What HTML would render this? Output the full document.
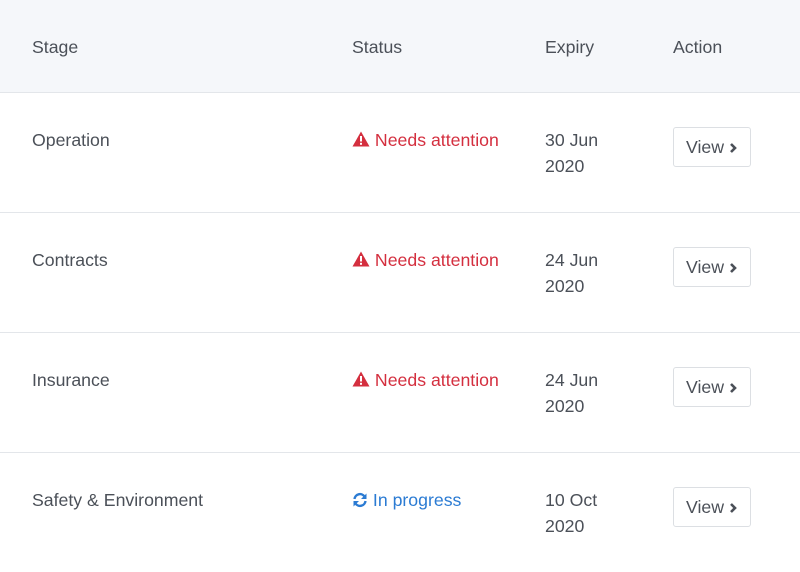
<!DOCTYPE html>
<html><head><style>
body{margin:0;width:800px;height:570px;overflow:hidden;background:#fff;font-family:"Liberation Sans",sans-serif;font-size:17.7px;color:#4b5058}
.h{height:92px;background:#f5f7fa;border-bottom:1px solid #e3e6ea;position:relative}
.r{height:119px;border-bottom:1px solid #e3e6ea;position:relative}
.c{position:absolute;line-height:26px}
.h .c{top:34px}
.r .c{top:34px}
.red{color:#d42f3f}.blue{color:#2b7bd3}
.btn{position:absolute;left:673px;top:34px;width:76px;height:38px;border:1px solid #dcdfe3;border-radius:3px;box-sizing:content-box;line-height:38px}
.btn span{position:absolute;left:12px}
.btn svg{position:absolute;left:55px;top:15px}
</style></head><body>
<div class="h"><div class="c" style="left:32px">Stage</div><div class="c" style="left:352px">Status</div><div class="c" style="left:545px">Expiry</div><div class="c" style="left:673px">Action</div></div>
<div class="r"><div class="c" style="left:32px">Operation</div><div class="c red" style="left:352px"><svg width="18" height="16" viewBox="0 0 18 16" style="vertical-align:-1px"><path d="M9 0.5L17.5 15.5H0.5Z" fill="#d42f3f"/><rect x="8" y="5" width="2" height="5.5" fill="#fff"/><rect x="8" y="11.8" width="2" height="2" fill="#fff"/></svg> Needs attention</div><div class="c" style="left:545px">30 Jun<br>2020</div><div class="btn"><span>View</span><svg width="9" height="10" viewBox="0 0 9 10"><path d="M2 1L6 5L2 9" stroke="#4b5058" stroke-width="2.6" fill="none"/></svg></div></div>
<div class="r"><div class="c" style="left:32px">Contracts</div><div class="c red" style="left:352px"><svg width="18" height="16" viewBox="0 0 18 16" style="vertical-align:-1px"><path d="M9 0.5L17.5 15.5H0.5Z" fill="#d42f3f"/><rect x="8" y="5" width="2" height="5.5" fill="#fff"/><rect x="8" y="11.8" width="2" height="2" fill="#fff"/></svg> Needs attention</div><div class="c" style="left:545px">24 Jun<br>2020</div><div class="btn"><span>View</span><svg width="9" height="10" viewBox="0 0 9 10"><path d="M2 1L6 5L2 9" stroke="#4b5058" stroke-width="2.6" fill="none"/></svg></div></div>
<div class="r"><div class="c" style="left:32px">Insurance</div><div class="c red" style="left:352px"><svg width="18" height="16" viewBox="0 0 18 16" style="vertical-align:-1px"><path d="M9 0.5L17.5 15.5H0.5Z" fill="#d42f3f"/><rect x="8" y="5" width="2" height="5.5" fill="#fff"/><rect x="8" y="11.8" width="2" height="2" fill="#fff"/></svg> Needs attention</div><div class="c" style="left:545px">24 Jun<br>2020</div><div class="btn"><span>View</span><svg width="9" height="10" viewBox="0 0 9 10"><path d="M2 1L6 5L2 9" stroke="#4b5058" stroke-width="2.6" fill="none"/></svg></div></div>
<div class="r" style="border:none"><div class="c" style="left:32px">Safety &amp; Environment</div><div class="c blue" style="left:352px"><svg width="16" height="16" viewBox="0 0 16 16" style="vertical-align:-2px"><path d="M2.5 7A5.5 5.5 0 0 1 12.5 4.5" stroke="#2b7bd3" stroke-width="2.4" fill="none"/><path d="M14.5 1.5V7H9Z" fill="#2b7bd3"/><path d="M13.5 9A5.5 5.5 0 0 1 3.5 11.5" stroke="#2b7bd3" stroke-width="2.4" fill="none"/><path d="M1.5 14.5V9H7Z" fill="#2b7bd3"/></svg> In progress</div><div class="c" style="left:545px">10 Oct<br>2020</div><div class="btn"><span>View</span><svg width="9" height="10" viewBox="0 0 9 10"><path d="M2 1L6 5L2 9" stroke="#4b5058" stroke-width="2.6" fill="none"/></svg></div></div>
</body></html>
